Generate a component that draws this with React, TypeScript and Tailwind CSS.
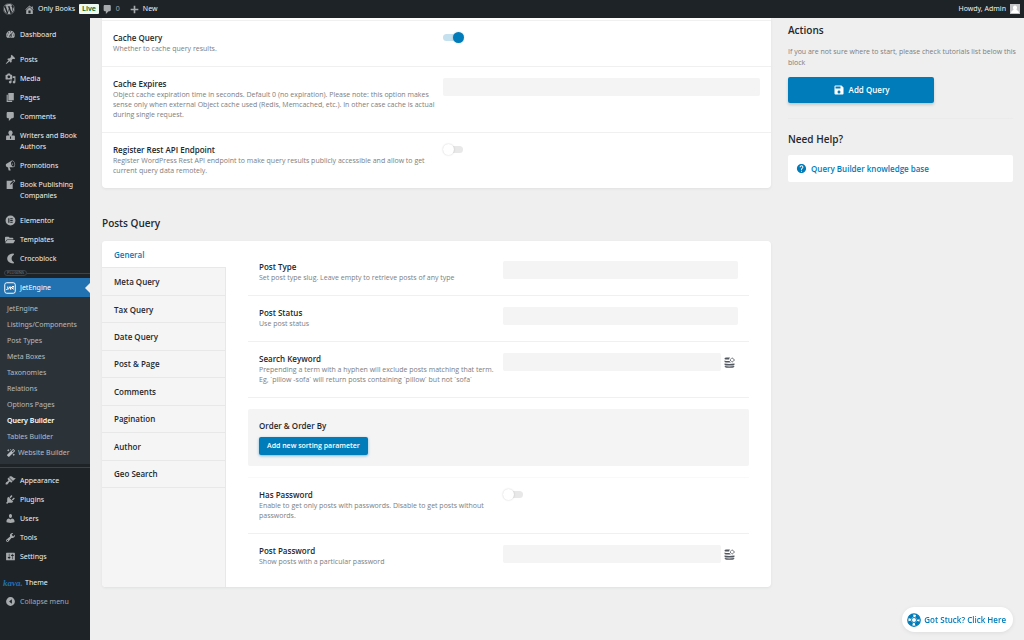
import { useState } from 'react';
import type { ReactNode } from 'react';
import { FaFolderOpen, FaMagic, FaWordpress } from 'react-icons/fa';
import { MdHelp, MdSave } from 'react-icons/md';

// 20x20 admin glyphs
const glyphs = {
	dashboard:
		'M3.76 16h12.48c1.1-1.37 1.76-3.11 1.76-5 0-4.42-3.58-8-8-8s-8 3.58-8 8c0 1.89.66 3.63 1.76 5zM10 4c.55 0 1 .45 1 1s-.45 1-1 1-1-.45-1-1 .45-1 1-1zM6 6c.55 0 1 .45 1 1s-.45 1-1 1-1-.45-1-1 .45-1 1-1zm8 0c.55 0 1 .45 1 1s-.45 1-1 1-1-.45-1-1 .45-1 1-1zm-5.37 5.55L12 7v6c0 1.1-.9 2-2 2s-2-.9-2-2c0-.57.24-1.08.63-1.45zM4 10c.55 0 1 .45 1 1s-.45 1-1 1-1-.45-1-1 .45-1 1-1zm12 0c.55 0 1 .45 1 1s-.45 1-1 1-1-.45-1-1 .45-1 1-1zm-5 3c0-.55-.45-1-1-1s-1 .45-1 1 .45 1 1 1 1-.45 1-1z',
	home: 'M16 8.5l1.53 1.53-1.06 1.06L10 4.6l-6.47 6.49-1.06-1.06L10 2.5l4 4v-2h2v4zm-6-2.46l6 5.99V18H4v-5.97zM12 17v-5H8v5h4z',
	post: 'M10.44 3.02l1.82-1.82 6.36 6.35-1.83 1.82c-1.05-.68-2.48-.57-3.41.36l-.75.75c-.92.93-1.04 2.35-.35 3.41l-1.83 1.82-2.41-2.41-2.8 2.79c-.42.42-3.38 2.71-3.8 2.29s1.86-3.39 2.28-3.81l2.79-2.79L4.1 9.36l1.83-1.82c1.05.69 2.48.57 3.4-.36l.75-.75c.93-.92 1.05-2.35.36-3.41z',
	media:
		'M13 11V4c0-.55-.45-1-1-1h-1.67L9 1H5L3.67 3H2c-.55 0-1 .45-1 1v7c0 .55.45 1 1 1h10c.55 0 1-.45 1-1zM7 4.5c1.38 0 2.5 1.12 2.5 2.5S8.38 9.5 7 9.5 4.5 8.38 4.5 7 5.62 4.5 7 4.5zM14 6h5v10.5c0 1.38-1.12 2.5-2.5 2.5S14 17.88 14 16.5s1.12-2.5 2.5-2.5c.17 0 .34.02.5.05V9h-3V6zm-4 8.05V13h2v3.5c0 1.38-1.12 2.5-2.5 2.5S7 17.88 7 16.5 8.12 14 9.5 14c.17 0 .34.02.5.05z',
	page: 'M6 15V2h10v13H6zm-1 1h8v2H3V5h2v11z',
	comment:
		'M5 2h9c1.1 0 2 .9 2 2v7c0 1.1-.9 2-2 2h-2l-5 5v-5H5c-1.1 0-2-.9-2-2V4c0-1.1.9-2 2-2z',
	user: 'M10 9.25c-2.27 0-2.73-3.44-2.73-3.44C7 4.02 7.82 2 9.97 2c2.16 0 2.98 2.02 2.71 3.81 0 0-.41 3.44-2.68 3.44zm0 2.57L12.72 10c2.39 0 4.52 2.33 4.52 4.53v2.49s-3.65 1.13-7.24 1.13c-3.65 0-7.24-1.13-7.24-1.13v-2.49c0-2.25 1.94-4.48 4.47-4.48z',
	writer:
		'M10 1a4 4 0 0 1 2.6 7L12 10h4c1.1 0 2 .9 2 2v6H2v-6c0-1.1.9-2 2-2h4L7.4 8A4 4 0 0 1 10 1zM9 12v4h2v-4z',
	megaphone:
		'M18.15 5.94c.46 1.62.38 3.22-.02 4.48-.42 1.28-1.26 2.18-2.3 2.48-.16.06-.26.06-.4.06-.2.04-.3.04-.4.04h-6.8l2.22 5.5c.02.14-.06.26-.14.34-.08.1-.24.16-.34.16H6.95c-.1 0-.26-.06-.34-.16-.08-.08-.16-.2-.14-.34l-1-5.5H4.25c-.5.06-1.08-.18-1.56-.64s-.88-1.08-1.06-1.88c-.24-.8-.2-1.56-.02-2.2.18-.62.58-1.08 1.06-1.3l9.26-5.58c.1-.06.6-.26.74-.3 1.04-.3 2.24.1 3.22.98s1.84 2.24 2.26 3.86zM15.57 11.92c1.6-.4 2.28-2.9 1.6-5.72-.7-2.76-2.64-4.56-4.24-4.12-1.6.44-2.34 2.92-1.64 5.72.72 2.74 2.68 4.54 4.28 4.12zM13.6 8.9l-.6-3.2c1.4-.2 2.3 2.3 1.2 3.1z',
	write: 'M16.89 1.2l1.41 1.41c.39.39.39 1.02 0 1.41L14 8.33V18H3V3h10.67l1.8-1.8c.4-.39 1.03-.4 1.42 0zm-5.66 8.48l5.37-5.36-1.42-1.42-5.36 5.37-.71 2.12z',
	elementor:
		'M10 1a9 9 0 1 1 0 18 9 9 0 0 1 0-18zM6 6v8h2V6zM9.5 6v1.7H14V6zM9.5 9.15v1.7H14v-1.7zM9.5 12.3V14H14v-1.7z',
	croco: 'M15 1C8.5 1 4 5 4 10s4.5 9 11 9c1.4 0 1.8-1.8.6-2.6C13.2 15 12 12.6 12 10s1.2-5 3.6-6.4C16.8 2.8 16.4 1 15 1z',
	appearance:
		'M14.48 11.06L7.41 3.99l1.5-1.5c.5-.56 2.3-.47 3.51.32 1.21.8 1.43 1.28 2.91 2.1 1.18.64 2.45 1.26 4.45.85zm-.71.71L6.7 4.7 4.93 6.47c-.39.39-.39 1.02 0 1.41l1.06 1.06c.39.39.39 1.03 0 1.42-.6.6-1.43 1.11-2.21 1.69-.35.26-.7.53-1.01.84C1.43 14.23.4 16.08 1.4 17.07c.99 1 2.84-.03 4.18-1.36.31-.31.58-.66.85-1.02.57-.78 1.08-1.61 1.69-2.21.39-.39 1.02-.39 1.41 0l1.06 1.06c.39.39 1.02.39 1.41 0z',
	plugins:
		'M13.11 4.36L9.87 7.6 8 5.73l3.24-3.24c.35-.34 1.05-.2 1.56.32.52.51.66 1.21.31 1.55zm-8 1.77l.91-1.12 9.01 9.01-1.19.84c-.71.71-2.63 1.16-3.82 1.16H6.14L4.9 17.26c-.59.59-1.54.59-2.12 0-.59-.58-.59-1.53 0-2.12l1.24-1.24v-3.88c0-1.13.4-3.19 1.09-3.89zm7.26 3.97l3.24-3.24c.34-.35 1.04-.21 1.55.31.52.51.66 1.21.31 1.55l-3.24 3.25z',
	tools: 'M16.68 9.77c-1.34 1.34-3.3 1.67-4.95.99l-5.41 6.52c-.99.99-2.59.99-3.58 0s-.99-2.59 0-3.57l6.52-5.42c-.68-1.65-.35-3.61.99-4.95 1.28-1.28 3.12-1.62 4.72-1.06l-2.89 2.89 2.82 2.82 2.86-2.87c.53 1.58.18 3.39-1.08 4.65zM3.81 16.21c.4.39 1.04.39 1.43 0 .4-.4.4-1.04 0-1.43-.39-.4-1.03-.4-1.43 0-.39.39-.39 1.03 0 1.43z',
	settings:
		'M18 16V4c0-.55-.45-1-1-1H3c-.55 0-1 .45-1 1v12c0 .55.45 1 1 1h14c.55 0 1-.45 1-1zM8 11h1c.55 0 1 .45 1 1s-.45 1-1 1H8v1.5c0 .28-.22.5-.5.5s-.5-.22-.5-.5V13H6c-.55 0-1-.45-1-1s.45-1 1-1h1V5.5c0-.28.22-.5.5-.5s.5.22.5.5V11zm5-2h-1c-.55 0-1-.45-1-1s.45-1 1-1h1V5.5c0-.28.22-.5.5-.5s.5.22.5.5V7h1c.55 0 1 .45 1 1s-.45 1-1 1h-1v5.5c0 .28-.22.5-.5.5s-.5-.22-.5-.5V9z',
	plus: 'M17 8.5v3h-5.5V17h-3v-5.5H3v-3h5.5V3h3v5.5z',
	collapse: 'M10 2a8 8 0 1 1 0 16 8 8 0 0 1 0-16zM12.5 6l-5 4 5 4z',
};

const Glyph = ({ name }: { name: keyof typeof glyphs }) => (
	<svg viewBox="0 0 20 20" fill="currentColor" className="size-[11px] shrink-0">
		<path fillRule="evenodd" d={glyphs[name]} />
	</svg>
);

const JetLogo = () => (
	<svg
		viewBox="0 0 24 24"
		fill="none"
		stroke="currentColor"
		strokeWidth="2"
		className="size-3 shrink-0">
		<rect x="1.5" y="1.5" width="21" height="21" rx="4" />
		<path d="M4 15h1.500q2 0 2-2V9M8.500 15l3-5.500 2 5.500M13.500 9v6M14 10l5 5M16 9h4M16 12h4" />
	</svg>
);

const DatabaseIcon = () => (
	<svg viewBox="0 0 22 22" className="size-[11px]">
		<path
			fill="#50575e"
			d="M1 3q0-2 4-2h7q-2 2-1.500 4H3Q1 5 1 3zM1 7q3 1.500 10 1 1 2 3 3H4q-3 0-3-2zM1 13q9 1.500 20 0v2q0 2-3 2H4q-3 0-3-2zM1 18q9 1.500 20 0-.5 3.500-4 3.500H5q-3.500 0-4-3.500z"
		/>
		<circle
			cx="16.5"
			cy="6"
			r="3.6"
			fill="#fff"
			stroke="#50575e"
			strokeWidth="2"
			strokeDasharray="2.8 .9"
		/>
	</svg>
);

const LifeRing = () => (
	<svg viewBox="0 0 28 28" className="size-[14px] shrink-0" fill="none" stroke="#007cba">
		<circle cx="14" cy="14" r="12.5" strokeWidth="2.5" />
		<circle
			cx="14"
			cy="14"
			r="9"
			strokeWidth="6"
			strokeDasharray="9 5.14"
			strokeDashoffset="-2.57"
		/>
		<circle cx="14" cy="14" r="5" strokeWidth="2" />
	</svg>
);

type MenuEntry = { label: string; icon: ReactNode };

const menuGroups: MenuEntry[][] = [
	[{ label: 'Dashboard', icon: <Glyph name="dashboard" /> }],
	[
		{ label: 'Posts', icon: <Glyph name="post" /> },
		{ label: 'Media', icon: <Glyph name="media" /> },
		{ label: 'Pages', icon: <Glyph name="page" /> },
		{ label: 'Comments', icon: <Glyph name="comment" /> },
		{ label: 'Writers and Book Authors', icon: <Glyph name="writer" /> },
		{ label: 'Promotions', icon: <Glyph name="megaphone" /> },
		{ label: 'Book Publishing Companies', icon: <Glyph name="write" /> },
	],
	[
		{ label: 'Elementor', icon: <Glyph name="elementor" /> },
		{ label: 'Templates', icon: <FaFolderOpen className="size-[10px] shrink-0" /> },
		{ label: 'Crocoblock', icon: <Glyph name="croco" /> },
	],
];

const lowerMenu: MenuEntry[] = [
	{ label: 'Appearance', icon: <Glyph name="appearance" /> },
	{ label: 'Plugins', icon: <Glyph name="plugins" /> },
	{ label: 'Users', icon: <Glyph name="user" /> },
	{ label: 'Tools', icon: <Glyph name="tools" /> },
	{ label: 'Settings', icon: <Glyph name="settings" /> },
];

const subMenu = [
	'JetEngine',
	'Listings/Components',
	'Post Types',
	'Meta Boxes',
	'Taxonomies',
	'Relations',
	'Options Pages',
	'Query Builder',
	'Tables Builder',
];

const tabs = [
	'General',
	'Meta Query',
	'Tax Query',
	'Date Query',
	'Post & Page',
	'Comments',
	'Pagination',
	'Author',
	'Geo Search',
];

const MenuList = ({ items }: { items: MenuEntry[] }) => (
	<ul>
		{items.map(({ label, icon }) => (
			<li key={label}>
				<a href="#" className="flex gap-1 pl-[5px] pr-2 py-1 leading-[11px] hover:text-[#72aee6]">
					<span className="flex w-[11px] h-[11px] items-center text-[#a7aaad]">{icon}</span>
					<span className="flex-1">{label}</span>
				</a>
			</li>
		))}
	</ul>
);

function AdminBar() {
	return (
		<header className="flex items-center justify-between h-[18px] bg-[#1d2327] text-[#f0f0f1] font-['Noto_Sans',sans-serif] text-[7px] leading-[10px] pl-[3px] pr-1">
			<div className="flex items-center">
				<a href="#" aria-label="About WordPress" className="text-[#a7aaad]">
					<FaWordpress className="size-3" />
				</a>
				<a href="#" className="flex items-center gap-[3px] ml-[9px]">
					<span className="text-[#a7aaad]">
						<Glyph name="home" />
					</span>
					Only Books
				</a>
				<span className="ml-1 px-[3px] rounded-[1px] bg-[#edfaef] text-[#00692b] font-semibold">
					Live
				</span>
				<a href="#" className="flex items-center gap-[3px] ml-[3px] text-[#a7aaad]">
					<Glyph name="comment" />0
				</a>
				<a href="#" className="flex items-center gap-[3px] ml-[9px]">
					<span className="text-[#a7aaad]">
						<Glyph name="plus" />
					</span>
					New
				</a>
			</div>
			<a href="#" className="flex items-center gap-1">
				Howdy, Admin
				<svg viewBox="0 0 20 20" className="size-[10px]">
					<path fill="#c3c4c7" d="M0 0h20v20H0z" />
					<path fill="#fff" d="M10 3a4 4.500 0 0 1 3 7.500q0 2 2 2.500 3 1 3 5H2q0-4 3-5 2-.5 2-2.500A4 4.500 0 0 1 10 3z" />
				</svg>
			</a>
		</header>
	);
}

function SideBar() {
	return (
		<nav className="flex flex-col w-[90px] shrink-0 pt-[7px] bg-[#1d2327] text-[#f0f0f1] font-['Noto_Sans',sans-serif] text-[7px] leading-[10px]">
			<div className="flex flex-col gap-[6px]">
				{menuGroups.map((group) => (
					<MenuList key={group[0].label} items={group} />
				))}
			</div>

			<div className="flex items-center h-[10px] pl-1 text-[4px] leading-[4px] text-[#787c82]">
				<span className="px-[2px] rounded-sm border border-[#3c434a]">PLUGINS</span>
				<span className="flex-1 h-px bg-[#3c434a]" />
			</div>

			<a href="#" className="relative flex items-center gap-1 h-[19px] pl-1 bg-[#2271b1] text-white">
				<JetLogo />
				JetEngine
				<span className="absolute right-0 top-[5px] border-y-[5px] border-r-[5px] border-y-transparent border-r-[#f0f0f1]" />
			</a>
			<ul className="pt-1 pb-[3px] bg-[#2c3338] text-[#b5bbc1]">
				{subMenu.map((item) => (
					<li key={item}>
						<a
							href="#"
							className={`flex items-center h-4 pl-[7px] hover:text-[#72aee6] ${
								item == 'Query Builder' ? 'text-white font-semibold' : ''
							}`}>
							{item}
						</a>
					</li>
				))}
				<li>
					<a href="#" className="flex items-center gap-[3px] h-4 pl-[7px]">
						<FaMagic className="size-2" />
						Website Builder
					</a>
				</li>
			</ul>

			<div className="flex items-center h-[7px]">
				<span className="flex-1 h-px bg-[#3c434a]" />
			</div>
			<MenuList items={lowerMenu} />

			<a href="#" className="flex items-center gap-1 h-[19px] mt-[7px] pl-[3px]">
				<span className="w-[18px] font-['Liberation_Serif',serif] italic font-bold text-[9px] text-[#2271b1]">
					kava.
				</span>
				Theme
			</a>
			<button type="button" className="flex items-center gap-1 h-[19px] pl-[5px] text-[#a7aaad]">
				<Glyph name="collapse" />
				Collapse menu
			</button>
		</nav>
	);
}

type RowProps = {
	id: string;
	title: string;
	desc: string;
	last?: boolean;
	children: ReactNode;
};

const Row = ({ id, title, desc, last, children }: RowProps) => (
	<div
		className={`grid grid-cols-[51%_49%] px-[11px] pt-[11px] pb-3 ${
			last ? '' : 'border-b border-[#f0f0f1]'
		}`}>
		<div className="pr-1">
			<label htmlFor={id} className="block text-[8px] leading-[12px] font-semibold text-[#23282d]">
				{title}
			</label>
			<p className="text-[7px] leading-[10px] text-[#7b7e81]">{desc}</p>
		</div>
		<div className="flex items-start">{children}</div>
	</div>
);

const Field = ({ id, type = 'text' }: { id: string; type?: string }) => (
	<input
		id={id}
		type={type}
		className="flex-1 min-w-0 h-[18px] px-1 rounded-[2px] bg-[#f4f4f5] text-[8px] outline-none"
	/>
);

const DynamicField = ({ id }: { id: string }) => (
	<>
		<Field id={id} />
		<button type="button" aria-label="Dynamic value" className="flex items-center h-[18px] px-[3px]">
			<DatabaseIcon />
		</button>
	</>
);

const Toggle = ({ id, on = false }: { id: string; on?: boolean }) => {
	const [checked, setChecked] = useState(on);

	return (
		<input
			id={id}
			type="checkbox"
			checked={checked}
			onChange={() => setChecked(!checked)}
			className="relative appearance-none w-5 h-[7px] mt-[2px] rounded-full bg-[#e8e8e9] checked:bg-[#c5e0ef] before:absolute before:-top-[2px] before:left-0 before:size-[11px] before:rounded-full before:bg-white before:shadow-[0_0_2px_rgba(0,0,0,0.2)] checked:before:left-[10px] checked:before:bg-[#007cba]"
		/>
	);
};

function GeneralSettings() {
	return (
		<section className="pt-[2px] bg-white rounded-b shadow-[0_1px_3px_rgba(35,40,45,0.07)]">
			<div className="border-t border-[#f0f0f1]">
				<Row id="cache-query" title="Cache Query" desc="Whether to cache query results.">
					<Toggle id="cache-query" on />
				</Row>
				<Row
					id="cache-expires"
					title="Cache Expires"
					desc="Object cache expiration time in seconds. Default 0 (no expiration). Please note: this option makes sense only when external Object cache used (Redis, Memcached, etc.). In other case cache is actual during single request.">
					<Field id="cache-expires" />
				</Row>
				<Row
					id="rest-endpoint"
					title="Register Rest API Endpoint"
					desc="Register WordPress Rest API endpoint to make query results publicly accessible and allow to get current query data remotely."
					last>
					<Toggle id="rest-endpoint" />
				</Row>
			</div>
		</section>
	);
}

function PostsQuery() {
	const [active, setActive] = useState('General');

	return (
		<section>
			<h2 className="mt-7 text-[10px] leading-[14px] font-semibold text-[#23282d]">Posts Query</h2>
			<div className="flex mt-[11px] bg-white rounded shadow-[0_1px_3px_rgba(35,40,45,0.07)]">
				<div className="w-[124px] shrink-0 rounded-l border-r border-[#e8e8e9] bg-[#f5f5f5]">
					<div className="grid grid-rows-9 h-[247px]">
						{tabs.map((tab) => (
							<button
								key={tab}
								type="button"
								onClick={() => setActive(tab)}
								className={`px-3 pt-px text-left text-[8px] leading-[10px] font-semibold border-b border-[#e8e8e9] ${
									tab == active ? '-mr-px bg-white rounded-tl text-[#007cba]' : 'text-[#23282d]'
								}`}>
								{tab}
							</button>
						))}
					</div>
				</div>
				<div className="flex-1 min-w-0 px-[22px] pt-[9px] pb-2">
					<Row id="post-type" title="Post Type" desc="Set post type slug. Leave empty to retrieve posts of any type">
						<Field id="post-type" />
					</Row>
					<Row id="post-status" title="Post Status" desc="Use post status">
						<Field id="post-status" />
					</Row>
					<Row
						id="search-keyword"
						title="Search Keyword"
						desc="Prepending a term with a hyphen will exclude posts matching that term. Eg, `pillow -sofa` will return posts containing `pillow` but not `sofa`">
						<DynamicField id="search-keyword" />
					</Row>
					<div className="my-[11px] px-[11px] pt-3 pb-[11px] rounded-[2px] bg-[#f4f4f5]">
						<h3 className="text-[8px] leading-[10px] font-semibold text-[#23282d]">Order & Order By</h3>
						<button
							type="button"
							className="block mt-[6px] h-[18px] px-2 rounded-[2px] bg-[#007cba] text-white text-[7px] leading-[10px] font-semibold shadow-[0_1px_3px_rgba(0,124,186,0.5)]">
							Add new sorting parameter
						</button>
					</div>
					<div className="border-t border-[#f9f9f9]">
						<Row
							id="has-password"
							title="Has Password"
							desc="Enable to get only posts with passwords. Disable to get posts without passwords.">
							<Toggle id="has-password" />
						</Row>
						<Row id="post-password" title="Post Password" desc="Show posts with a particular password" last>
							<DynamicField id="post-password" />
						</Row>
					</div>
				</div>
			</div>
		</section>
	);
}

function Actions() {
	return (
		<aside className="w-[225px] shrink-0 pt-[5px]">
			<h2 className="text-[10px] leading-[14px] font-semibold text-[#23282d]">Actions</h2>
			<p className="mt-[9px] -mr-2 text-[7px] leading-[11px] text-[#7b7e81]">
				If you are not sure where to start, please check tutorials list below this block
			</p>
			<button
				type="button"
				className="flex items-center justify-center gap-1 w-[65%] h-[26px] mt-[9px] rounded-[2px] bg-[#007cba] text-white text-[8px] font-semibold shadow-[0_2px_3px_rgba(35,40,45,0.2)]">
				<MdSave className="size-3" />
				Add Query
			</button>
			<h2 className="mt-[15px] pt-[13px] border-t border-[#ebebeb] text-[10px] leading-[14px] font-semibold text-[#23282d]">
				Need Help?
			</h2>
			<a
				href="#"
				className="flex items-center gap-1 h-[27px] mt-[9px] px-2 rounded-[2px] bg-white text-[#007cba] text-[8px] font-semibold">
				<MdHelp className="size-[11px]" />
				Query Builder knowledge base
			</a>
		</aside>
	);
}

function App() {
	return (
		<div className="flex flex-col min-h-screen bg-[#efefef] font-['Open_Sans',sans-serif]">
			<AdminBar />
			<div className="flex flex-1">
				<SideBar />
				<main className="flex flex-1 min-w-0 items-start gap-[17px] pl-3 pr-[11px] pb-8">
					<div className="flex-1 min-w-0">
						<GeneralSettings />
						<PostsQuery />
					</div>
					<Actions />
				</main>
			</div>
			<button
				type="button"
				className="fixed right-[11px] bottom-2 flex items-center gap-[3px] h-[25px] pl-[5px] pr-[7px] rounded-full bg-white text-[#007cba] text-[8px] font-semibold shadow-[0_1px_4px_rgba(0,0,0,0.08)]">
				<LifeRing />
				Got Stuck? Click Here
			</button>
		</div>
	);
}

export default App;
